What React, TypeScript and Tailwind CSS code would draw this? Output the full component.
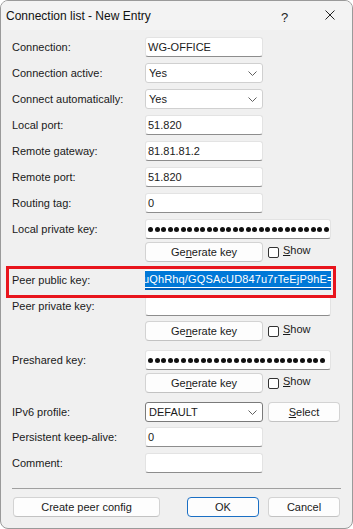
import type { ReactNode } from 'react'

const font = { fontFamily: '"Liberation Sans", Arial, sans-serif' }

function Label({ children }: { children: ReactNode }) {
  return <div className="w-[133px] shrink-0 text-[11px] text-[#1a1a1a] leading-none">{children}</div>
}

function TextBox({ value, wide }: { value?: string; wide?: boolean }) {
  return (
    <div
      className={`${wide ? 'w-[186px]' : 'w-[118px]'} h-[20px] bg-white border border-[#e3e3e3] border-b-[#8d8d8d] rounded-[3px] flex items-center pl-[2px] text-[11px] text-[#1a1a1a]`}
    >
      {value}
    </div>
  )
}

function Dots({ count, wide }: { count: number; wide: number }) {
  return (
    <div className="w-[186px] h-[20px] bg-white border border-[#e3e3e3] border-b-[#8d8d8d] rounded-[3px] flex items-center pl-[2px]">
      <div className="flex justify-between" style={{ width: wide }}>
        {Array.from({ length: count }).map((_, i) => (
          <span key={i} className="w-[5px] h-[5px] rounded-full bg-[#111]" />
        ))}
      </div>
    </div>
  )
}

function Chevron() {
  return (
    <svg width="9" height="5" viewBox="0 0 9 5" className="shrink-0">
      <polyline points="0.5,0.5 4.5,4.5 8.5,0.5" fill="none" stroke="#606060" strokeWidth="1" />
    </svg>
  )
}

function Combo({ value, dark }: { value: string; dark?: boolean }) {
  return (
    <div
      className={`w-[118px] h-[20px] bg-white border ${dark ? 'border-[#7a7a7a]' : 'border-[#d0d0d0]'} rounded-[3px] flex items-center justify-between pl-[3px] pr-[5px] text-[11px] text-[#1a1a1a]`}
    >
      <span>{value}</span>
      <Chevron />
    </div>
  )
}

function Btn({ children, w, primary }: { children: ReactNode; w: string; primary?: boolean }) {
  return (
    <div
      className={`${w} h-[20px] rounded-[4px] border ${primary ? 'border-[#1a6fc4]' : 'border-[#d3d3d3] border-b-[#c2c2c2]'} bg-[#fdfdfd] flex items-center justify-center text-[11px] text-[#1a1a1a]`}
    >
      {children}
    </div>
  )
}

function GenerateRow({ mt }: { mt: string }) {
  return (
    <div className={`flex items-center h-[20px] ${mt}`}>
      <div className="w-[133px] shrink-0" />
      <Btn w="w-[118px]">
        <span>
          Ge<span className="underline">n</span>erate key
        </span>
      </Btn>
      <div className="ml-[5px] w-[11px] h-[11px] rounded-[2px] border border-[#333] bg-white" />
      <span className="ml-[4px] text-[11px] text-[#1a1a1a] -mt-[3px]">
        <span className="underline">S</span>how
      </span>
    </div>
  )
}

function Row({ label, mt, children }: { label: string; mt: string; children: ReactNode }) {
  return (
    <div className={`flex items-center h-[20px] ${mt}`}>
      <Label>{label}</Label>
      {children}
    </div>
  )
}

export default function App() {
  return (
    <div className="w-[353px] h-[529px] bg-white" style={font}>
      <div className="w-full h-full rounded-[8px] border border-[#9a9a9a] bg-[#f0f0f0] overflow-hidden flex flex-col">
        <div className="h-[29px] shrink-0 bg-[#f3f3f3] flex items-center pl-[5px] relative">
          <span className="text-[12px] text-[#111]">Connection list - New Entry</span>
          <span className="absolute left-[280px] top-[7px] text-[13px] text-[#222]">?</span>
          <svg width="10" height="10" viewBox="0 0 10 10" className="absolute left-[324px] top-[9px]">
            <path d="M0.5 0.5 L9.5 9.5 M9.5 0.5 L0.5 9.5" stroke="#222" strokeWidth="1" />
          </svg>
        </div>

        <div className="flex flex-col pl-[11px] pr-[11px]">
          <Row label="Connection:" mt="mt-[7px]">
            <TextBox value="WG-OFFICE" />
          </Row>
          <Row label="Connection active:" mt="mt-[6px]">
            <Combo value="Yes" />
          </Row>
          <Row label="Connect automatically:" mt="mt-[6px]">
            <Combo value="Yes" />
          </Row>
          <Row label="Local port:" mt="mt-[6px]">
            <TextBox value="51.820" />
          </Row>
          <Row label="Remote gateway:" mt="mt-[6px]">
            <TextBox value="81.81.81.2" />
          </Row>
          <Row label="Remote port:" mt="mt-[6px]">
            <TextBox value="51.820" />
          </Row>
          <Row label="Routing tag:" mt="mt-[6px]">
            <TextBox value="0" />
          </Row>
          <Row label="Local private key:" mt="mt-[6px]">
            <Dots count={28} wide={181} />
          </Row>
          <GenerateRow mt="mt-[3px]" />

          <div className="relative flex items-center h-[20px] mt-[8px]">
            <Label>Peer public key:</Label>
            <div className="w-[186px] h-[20px] bg-white border-b-2 border-[#005fb8] overflow-hidden flex items-start pt-[1px]">
              <span className="bg-[#0078d7] text-white text-[11px] leading-[16px] whitespace-nowrap tracking-[0.15px] -ml-[2px] pr-[6px]">
                uQhRhq/GQSAcUD847u7rTeEjP9hE=
              </span>
            </div>
            <div className="absolute -top-[4px] -bottom-[8px] -left-[6px] right-[5px] border-[3px] border-[#e8141c] pointer-events-none" />
          </div>

          <Row label="Peer private key:" mt="mt-[6px]">
            <TextBox wide />
          </Row>
          <GenerateRow mt="mt-[5px]" />
          <Row label="Preshared key:" mt="mt-[9px]">
            <Dots count={27} wide={177} />
          </Row>
          <GenerateRow mt="mt-[3px]" />
          <Row label="IPv6 profile:" mt="mt-[9px]">
            <Combo value="DEFAULT" dark />
            <div className="ml-[5px]">
              <Btn w="w-[72px]">
                <span>
                  <span className="underline">S</span>elect
                </span>
              </Btn>
            </div>
          </Row>
          <Row label="Persistent keep-alive:" mt="mt-[5px]">
            <TextBox value="0" />
          </Row>
          <Row label="Comment:" mt="mt-[6px]">
            <TextBox />
          </Row>

          <div className="h-px bg-[#a0a0a0] mt-[15px]" />

          <div className="flex items-center mt-[8px] pl-[1px] pr-[1px]">
            <Btn w="w-[147px]">Create peer config</Btn>
            <div className="ml-auto">
              <Btn w="w-[72px]" primary>
                OK
              </Btn>
            </div>
            <div className="ml-[9px]">
              <Btn w="w-[72px]">Cancel</Btn>
            </div>
          </div>
        </div>
      </div>
    </div>
  )
}
